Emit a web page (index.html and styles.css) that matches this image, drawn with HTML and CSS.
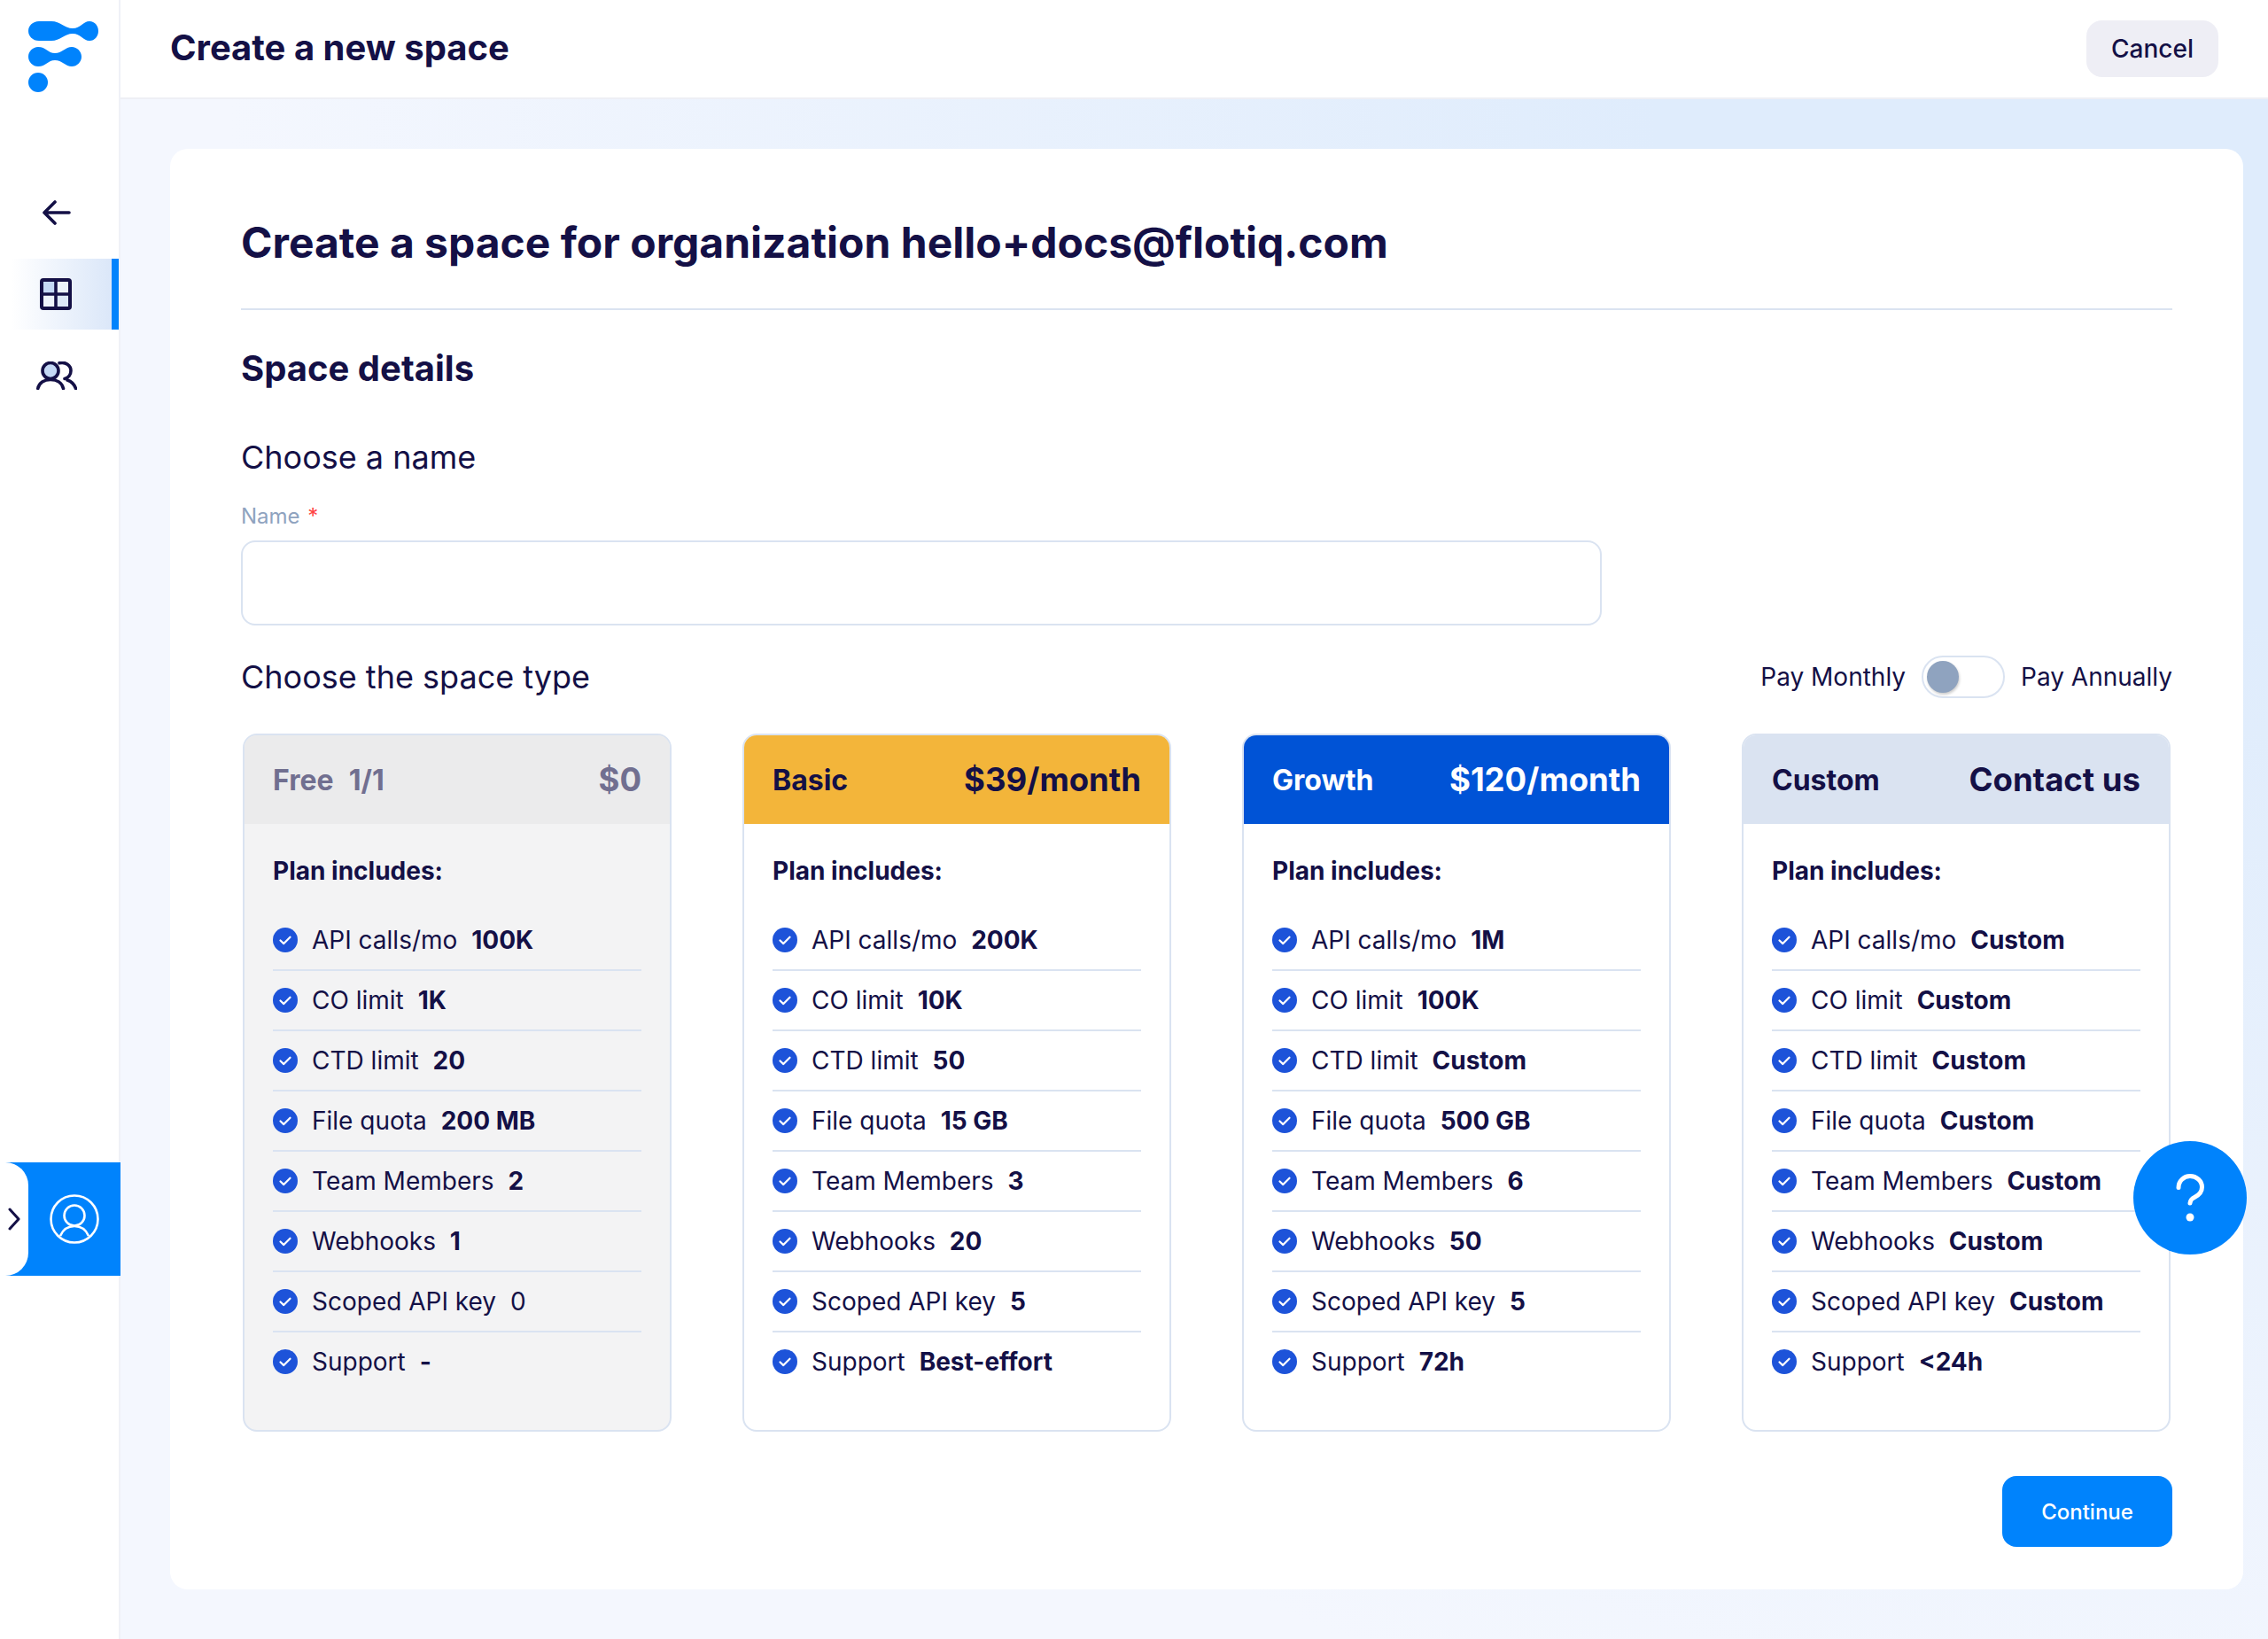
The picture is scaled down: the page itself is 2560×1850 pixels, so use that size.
FILE: index.html
```html
<!DOCTYPE html>
<html lang="en">
<head>
<meta charset="UTF-8">
<meta name="viewport" content="width=device-width, initial-scale=1.0">
<title>Create a new space</title>
<link rel="stylesheet" href="styles.css">
</head>
<body>

<svg class="sprite" width="0" height="0" aria-hidden="true">
  <symbol id="check" viewBox="0 0 28 28">
    <circle cx="14" cy="14" r="14" fill="#1d53d9"/>
    <path d="M8.5 14.5l3.800 3.600 7.200-7.400" fill="none" stroke="#fff" stroke-width="2.200" stroke-linecap="round" stroke-linejoin="round"/>
  </symbol>
</svg>

<div class="app">
  <aside class="sidebar">
    <svg class="logo" width="79" height="80" viewBox="32 24 79 80">
      <path fill="#0083fc" d="M44 24H58C68 24 73 32 82 32C91 32 94 24 101 24C107 24 111 29 111 35C111 41 107 46 101 46C94 46 91 38 82 38C73 38 68 46 58 46H44C37 46 32 41 32 35C32 29 37 24 44 24Z"/>
      <path fill="#0083fc" d="M43 53C52 53 54 60 62 60C70 60 74 53 81 53C87 53 92 58 92 64C92 70 87 75 81 75C74 75 70 68 62 68C54 68 52 75 43 75C37 75 32 70 32 64C32 58 37 53 43 53Z"/>
      <ellipse fill="#0083fc" cx="43" cy="93" rx="11" ry="11"/>
    </svg>

    <nav class="side-nav">
      <a class="side-item">
        <svg width="32" height="28" viewBox="0 0 32 28" fill="none" stroke="#141046" stroke-width="3.600" stroke-linecap="round" stroke-linejoin="round"><path d="M30 14H2M14 2L2 14l12 12"/></svg>
      </a>
      <a class="side-item active">
        <svg width="36" height="36" viewBox="0 0 36 36" fill="none">
          <rect x="3" y="3" width="15" height="15" fill="#c4d8f5"/>
          <rect x="18" y="18" width="15" height="15" fill="#dde8f8"/>
          <rect x="3" y="18" width="15" height="15" fill="#eef3fc"/>
          <rect x="2" y="2" width="32" height="32" rx="2" stroke="#141046" stroke-width="4"/>
          <path d="M18 2v32M2 18h32" stroke="#141046" stroke-width="3.600"/>
        </svg>
      </a>
      <a class="side-item">
        <svg width="46" height="32" viewBox="0 0 46 32" fill="none" stroke="#141046" stroke-width="3.600" stroke-linecap="round">
          <ellipse cx="16" cy="10.500" rx="9" ry="9" fill="#c4d8f5"/>
          <path d="M1.800 30.500C3 24 9 20.500 16 20.500S29 24 30.500 30.500"/>
          <path d="M26 1.800C33 0 39 4.500 39 10.500C39 15 36 18.500 32 19.500"/>
          <path d="M35 21C39.500 22.500 43 26 44.500 30.500"/>
        </svg>
      </a>
    </nav>

    <div class="user-panel">
      <button class="collapse-tab">
        <svg width="14" height="26" viewBox="0 0 14 26" fill="none" stroke="#141046" stroke-width="3" stroke-linecap="round" stroke-linejoin="round"><path d="M2 2l10 11L2 24"/></svg>
      </button>
      <svg class="avatar" width="56" height="56" viewBox="0 0 56 56" fill="none" stroke="#fff" stroke-width="2.600">
        <circle cx="28" cy="28" r="26.500"/>
        <circle cx="28" cy="24" r="11.500"/>
        <path d="M12 47C15 40 21 36 28 36S41 40 44 47"/>
      </svg>
    </div>
  </aside>

  <div class="main">
    <header class="topbar">
      <h1 class="topbar-title">Create a new space</h1>
      <button class="btn-cancel">Cancel</button>
    </header>

    <div class="content">
      <section class="panel">
        <h2 class="panel-title">Create a space for organization hello+docs@flotiq.com</h2>
        <h3 class="section-title">Space details</h3>
        <div class="sub-title name-title">Choose a name</div>
        <label class="field-label">Name <span class="required">*</span></label>
        <input class="field-input" type="text">

        <div class="type-row">
          <div class="sub-title">Choose the space type</div>
          <div class="billing">
            <span>Pay Monthly</span>
            <span class="toggle"><span class="toggle-knob"></span></span>
            <span>Pay Annually</span>
          </div>
        </div>

        <div class="plans">
          <div class="plan plan-free">
            <div class="plan-head"><span class="plan-name">Free&nbsp; 1/1</span><span class="plan-price">$0</span></div>
            <div class="plan-body">
              <div class="plan-includes">Plan includes:</div>
              <ul class="plan-list">
                <li><svg class="check"><use href="#check"/></svg>API calls/mo <b>100K</b></li>
                <li><svg class="check"><use href="#check"/></svg>CO limit <b>1K</b></li>
                <li><svg class="check"><use href="#check"/></svg>CTD limit <b>20</b></li>
                <li><svg class="check"><use href="#check"/></svg>File quota <b>200 MB</b></li>
                <li><svg class="check"><use href="#check"/></svg>Team Members <b>2</b></li>
                <li><svg class="check"><use href="#check"/></svg>Webhooks <b>1</b></li>
                <li><svg class="check"><use href="#check"/></svg>Scoped API key <span class="val">0</span></li>
                <li><svg class="check"><use href="#check"/></svg>Support <b>-</b></li>
              </ul>
            </div>
          </div>

          <div class="plan plan-basic">
            <div class="plan-head"><span class="plan-name">Basic</span><span class="plan-price">$39/month</span></div>
            <div class="plan-body">
              <div class="plan-includes">Plan includes:</div>
              <ul class="plan-list">
                <li><svg class="check"><use href="#check"/></svg>API calls/mo <b>200K</b></li>
                <li><svg class="check"><use href="#check"/></svg>CO limit <b>10K</b></li>
                <li><svg class="check"><use href="#check"/></svg>CTD limit <b>50</b></li>
                <li><svg class="check"><use href="#check"/></svg>File quota <b>15 GB</b></li>
                <li><svg class="check"><use href="#check"/></svg>Team Members <b>3</b></li>
                <li><svg class="check"><use href="#check"/></svg>Webhooks <b>20</b></li>
                <li><svg class="check"><use href="#check"/></svg>Scoped API key <b>5</b></li>
                <li><svg class="check"><use href="#check"/></svg>Support <b>Best-effort</b></li>
              </ul>
            </div>
          </div>

          <div class="plan plan-growth">
            <div class="plan-head"><span class="plan-name">Growth</span><span class="plan-price">$120/month</span></div>
            <div class="plan-body">
              <div class="plan-includes">Plan includes:</div>
              <ul class="plan-list">
                <li><svg class="check"><use href="#check"/></svg>API calls/mo <b>1M</b></li>
                <li><svg class="check"><use href="#check"/></svg>CO limit <b>100K</b></li>
                <li><svg class="check"><use href="#check"/></svg>CTD limit <b>Custom</b></li>
                <li><svg class="check"><use href="#check"/></svg>File quota <b>500 GB</b></li>
                <li><svg class="check"><use href="#check"/></svg>Team Members <b>6</b></li>
                <li><svg class="check"><use href="#check"/></svg>Webhooks <b>50</b></li>
                <li><svg class="check"><use href="#check"/></svg>Scoped API key <b>5</b></li>
                <li><svg class="check"><use href="#check"/></svg>Support <b>72h</b></li>
              </ul>
            </div>
          </div>

          <div class="plan plan-custom">
            <div class="plan-head"><span class="plan-name">Custom</span><span class="plan-price">Contact us</span></div>
            <div class="plan-body">
              <div class="plan-includes">Plan includes:</div>
              <ul class="plan-list">
                <li><svg class="check"><use href="#check"/></svg>API calls/mo <b>Custom</b></li>
                <li><svg class="check"><use href="#check"/></svg>CO limit <b>Custom</b></li>
                <li><svg class="check"><use href="#check"/></svg>CTD limit <b>Custom</b></li>
                <li><svg class="check"><use href="#check"/></svg>File quota <b>Custom</b></li>
                <li><svg class="check"><use href="#check"/></svg>Team Members <b>Custom</b></li>
                <li><svg class="check"><use href="#check"/></svg>Webhooks <b>Custom</b></li>
                <li><svg class="check"><use href="#check"/></svg>Scoped API key <b>Custom</b></li>
                <li><svg class="check"><use href="#check"/></svg>Support <b>&lt;24h</b></li>
              </ul>
            </div>
          </div>
        </div>

        <div class="actions">
          <button class="btn-continue">Continue</button>
        </div>
      </section>
    </div>
  </div>
</div>

<button class="help-btn">
  <svg width="32" height="54" viewBox="0 0 32 54" fill="none" stroke="#fff" stroke-width="5" stroke-linecap="round"><path d="M3 15.500C3 8 9 2.500 16 2.500C23.500 2.500 29.500 8 29.500 15C29.500 21 25 24.500 21 26.500C18 28 16.500 29 16 33"/><circle cx="16" cy="49" r="4.500" fill="#fff" stroke="none"/></svg>
</button>

</body>
</html>
```

FILE: styles.css
```css
* {
  box-sizing: border-box;
}

body {
  margin: 0;
  font-family: Inter, "Liberation Sans", sans-serif;
  color: #141046;
  background: #f4f7fe;
}

h1, h2, h3 {
  margin: 0;
}

.sprite {
  position: absolute;
}

.app {
  display: flex;
  min-height: 1850px;
}

/* sidebar */
.sidebar {
  width: 136px;
  flex-shrink: 0;
  background: #fff;
  border-right: 2px solid #eff1f7;
  position: relative;
  padding-top: 24px;
}

.logo {
  display: block;
  margin-left: 32px;
}

.side-nav {
  display: flex;
  flex-direction: column;
  margin-top: 96px;
}

.side-item {
  display: flex;
  align-items: center;
  justify-content: center;
  height: 80px;
  width: 134px;
  padding-right: 6px;
  margin-bottom: 12px;
}

.side-item.active {
  background: linear-gradient(to right, #fff 10%, #dbe7f9 100%);
  border-right: 8px solid #0083fc;
  padding-right: 0;
}

.user-panel {
  position: absolute;
  left: 0;
  top: 1312px;
  width: 136px;
  height: 128px;
  background: #0083fc;
  display: flex;
  align-items: center;
}

.collapse-tab {
  width: 32px;
  height: 128px;
  background: #fff;
  border: 0;
  border-radius: 0 26px 26px 0;
  padding: 0 0 0 9px;
  display: flex;
  align-items: center;
}

.avatar {
  margin-left: 24px;
}

/* top bar */
.main {
  flex: 1;
  display: flex;
  flex-direction: column;
}

.topbar {
  height: 112px;
  background: #fff;
  border-bottom: 2px solid #eeeff5;
  display: flex;
  align-items: center;
  justify-content: space-between;
  padding: 0 56px;
}

.topbar-title {
  font-size: 40px;
  font-weight: 700;
  margin-top: -4px;
}

.btn-cancel {
  width: 149px;
  height: 64px;
  background: #eeeef5;
  border: 0;
  border-radius: 18px;
  font: 500 28px Inter, sans-serif;
  color: #141046;
}

/* content */
.content {
  flex: 1;
  padding: 56px 28px 56px 56px;
  background: radial-gradient(ellipse 2300px 1950px at 100% 0, #dfecfc 30%, #f4f7fe 100%);
}

.panel {
  background: #fff;
  border-radius: 20px;
  height: 1626px;
  padding: 80px 80px 0;
}

.panel-title {
  font-size: 48px;
  font-weight: 700;
  line-height: 52px;
  padding-bottom: 48px;
  border-bottom: 2px solid #dae3f1;
}

.section-title {
  font-size: 40px;
  font-weight: 700;
  line-height: 48px;
  margin-top: 42px;
}

.sub-title {
  font-size: 36px;
  font-weight: 400;
  line-height: 44px;
}

.name-title {
  margin-top: 54px;
}

.field-label {
  display: block;
  font-size: 24px;
  line-height: 30px;
  color: #8fa3bf;
  margin-top: 30px;
}

.required {
  margin-left: 2px;
  color: #f44;
}

.field-input {
  display: block;
  width: 1536px;
  height: 96px;
  margin-top: 12px;
  border: 2px solid #dae3f1;
  border-radius: 16px;
  background: #fff;
}

.type-row {
  display: flex;
  align-items: center;
  justify-content: space-between;
  margin-top: 34px;
}

.billing {
  display: flex;
  align-items: center;
  gap: 18px;
  font-size: 28px;
}

.toggle {
  display: flex;
  align-items: center;
  width: 94px;
  height: 48px;
  padding-left: 4px;
  border: 2px solid #dae3f1;
  border-radius: 24px;
}

.toggle-knob {
  width: 36px;
  height: 36px;
  border-radius: 50%;
  background: #8fa3bf;
  box-shadow: 1px 2px 3px rgba(0, 0, 0, 0.2);
}

/* plans */
.plans {
  display: grid;
  grid-template-columns: repeat(4, 484px);
  justify-content: space-between;
  margin: 40px 2px 0;
}

.plan {
  height: 788px;
  border: 2px solid #dae3f1;
  border-radius: 16px;
  overflow: hidden;
  background: #fff;
}

.plan-head {
  display: flex;
  align-items: center;
  justify-content: space-between;
  height: 100px;
  padding: 0 32px;
}

.plan-name {
  font-size: 32px;
  font-weight: 700;
  word-spacing: 1px;
}

.plan-price {
  font-size: 36.5px;
  font-weight: 700;
}

.plan-body {
  padding: 33px 32px 0;
}

.plan-includes {
  font-size: 28px;
  font-weight: 700;
  line-height: 40px;
}

.plan-list {
  list-style: none;
  margin: 25px 0 0;
  padding: 0;
}

.plan-list li {
  display: flex;
  align-items: center;
  height: 68px;
  font-size: 28px;
  border-bottom: 2px solid #dae3f1;
  white-space: pre;
}

.plan-list li:last-child {
  border-bottom-color: transparent;
}

.plan-list b {
  font-weight: 700;
  margin-left: 8px;
}

.plan-list .val {
  margin-left: 8px;
}

.check {
  width: 28px;
  height: 28px;
  margin-right: 16px;
  flex-shrink: 0;
}

.plan-free {
  background: #f3f3f4;
}

.plan-free .plan-head {
  background: #ebebec;
  color: #716f90;
}

.plan-basic .plan-head {
  background: #f3b53a;
}

.plan-growth .plan-head {
  background: #0053d6;
  color: #fff;
}

.plan-custom .plan-head {
  background: #dae3f1;
}

.actions {
  display: flex;
  justify-content: flex-end;
  margin-top: 50px;
}

.btn-continue {
  width: 192px;
  height: 80px;
  background: #0083fc;
  border: 0;
  border-radius: 16px;
  color: #fff;
  font: 500 24px Inter, sans-serif;
}

/* floating help */
.help-btn {
  position: absolute;
  left: 2408px;
  top: 1288px;
  width: 128px;
  height: 128px;
  border: 0;
  border-radius: 50%;
  background: #0083fc;
  display: flex;
  align-items: center;
  justify-content: center;
}
```
